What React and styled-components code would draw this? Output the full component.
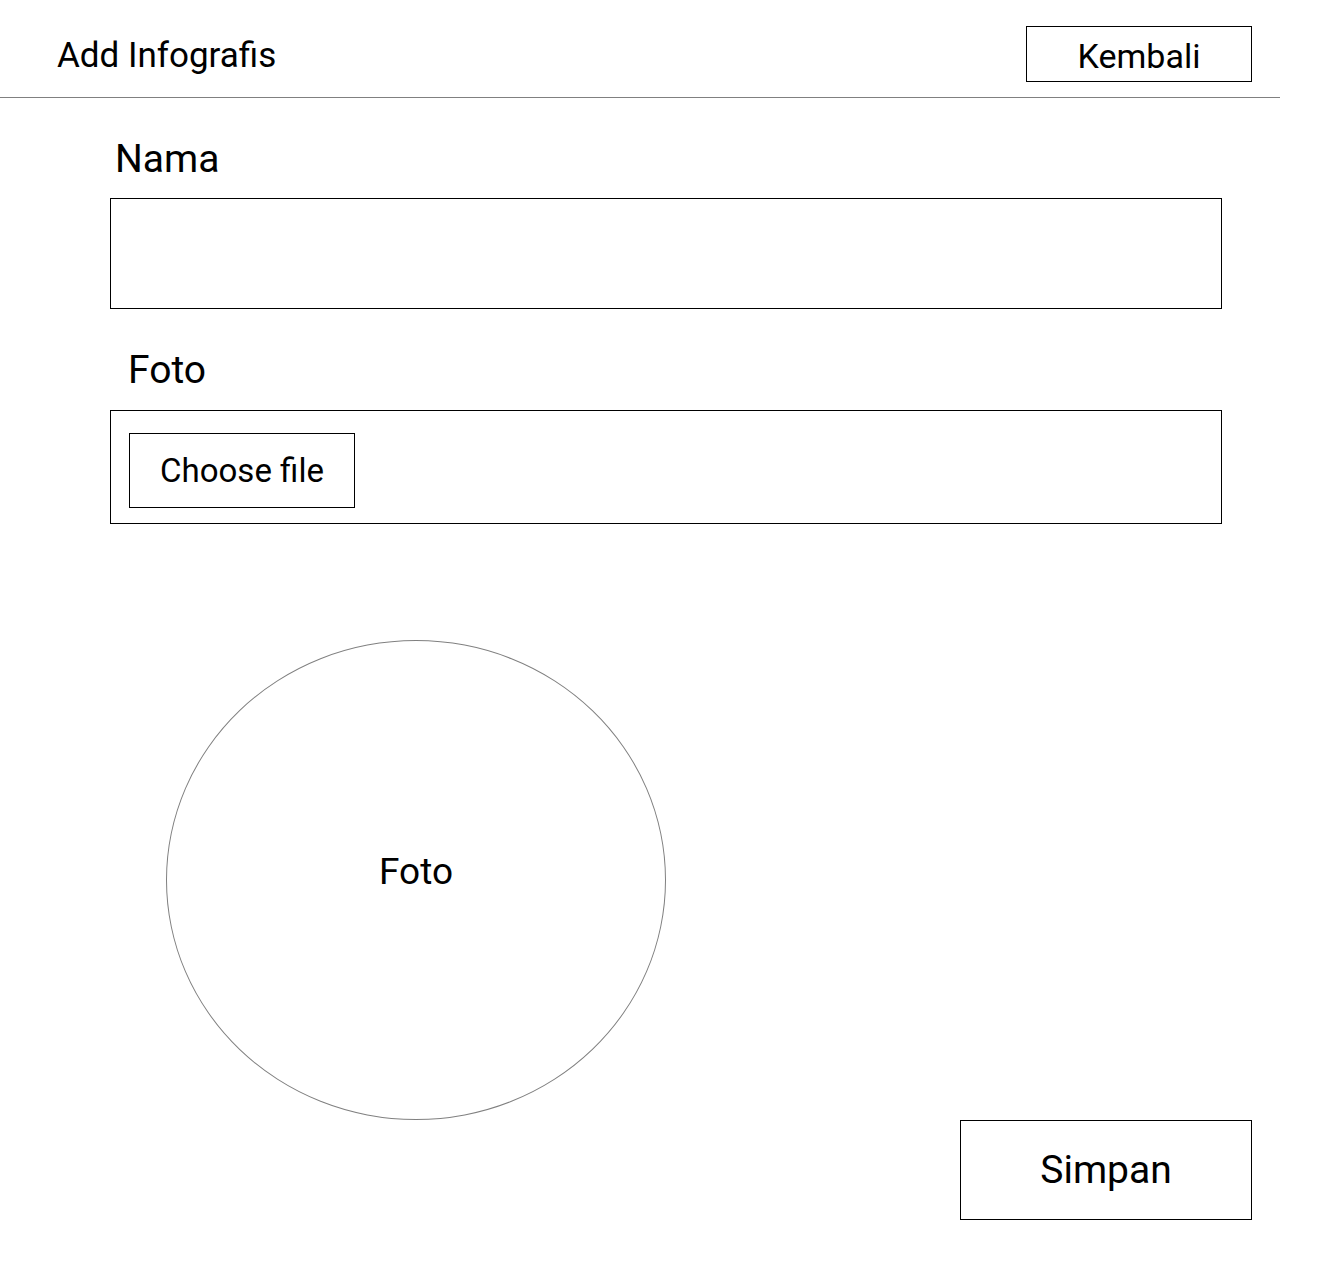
import React from "react";
import styled, { createGlobalStyle } from "styled-components";

const GlobalStyle = createGlobalStyle`
  body {
    margin: 0;
    background: #ffffff;
    font-family: Roboto, "Liberation Sans", sans-serif;
    color: #000;
  }
`;

const Page = styled.div`
  width: 1280px;
  min-height: 1280px;
`;

const Header = styled.header`
  box-sizing: border-box;
  height: 98px;
  display: flex;
  justify-content: space-between;
  align-items: flex-start;
  padding: 26px 28px 0 57px;
  border-bottom: 1px solid #808080;
`;

const Title = styled.h1`
  margin: 10px 0 0;
  font-size: 35px;
  font-weight: 400;
  line-height: 40px;
`;

const Button = styled.button`
  box-sizing: border-box;
  width: ${(p) => p.$w}px;
  height: ${(p) => p.$h}px;
  background: #fff;
  border: 1px solid #000;
  font-family: inherit;
  font-size: ${(p) => p.$size}px;
  color: #000;
  padding: ${(p) => (p.$drop ? `${p.$drop}px 0 0` : 0)};
  cursor: pointer;
`;

const Form = styled.main`
  padding: 38px 0 0 110px;
  width: 1112px;
`;

const Label = styled.div`
  margin-left: ${(p) => p.$indent}px;
  font-size: 39px;
  line-height: 46px;
  height: 46px;
`;

const TextBox = styled.div`
  box-sizing: border-box;
  margin-top: 16px;
  height: 111px;
  border: 1px solid #000;
`;

const FileBox = styled.div`
  box-sizing: border-box;
  margin-top: 17px;
  height: 114px;
  border: 1px solid #000;
  padding: 22px 18px;
`;

const Spacer = styled.div`
  height: ${(p) => p.$h}px;
`;

const Preview = styled.div`
  box-sizing: border-box;
  margin: 116px 0 0 166px;
  width: 500px;
  height: 480px;
  border: 1px solid #808080;
  border-radius: 50%;
  display: flex;
  align-items: center;
  justify-content: center;
  font-size: 37px;
  padding-bottom: 18px;
`;

const Footer = styled.div`
  display: flex;
  justify-content: flex-end;
  padding-right: 28px;
`;

export default function App() {
  return (
    <Page>
      <GlobalStyle />
      <Header>
        <Title>Add Infografis</Title>
        <Button $w={226} $h={56} $size={34} $drop={4}>
          Kembali
        </Button>
      </Header>
      <Form>
        <Label $indent={5}>Nama</Label>
        <TextBox />
        <Spacer $h={38} />
        <Label $indent={18}>Foto</Label>
        <FileBox>
          <Button $w={226} $h={75} $size={33}>
            Choose file
          </Button>
        </FileBox>
      </Form>
      <Preview>Foto</Preview>
      <Footer>
        <Button $w={292} $h={100} $size={39}>
          Simpan
        </Button>
      </Footer>
    </Page>
  );
}
